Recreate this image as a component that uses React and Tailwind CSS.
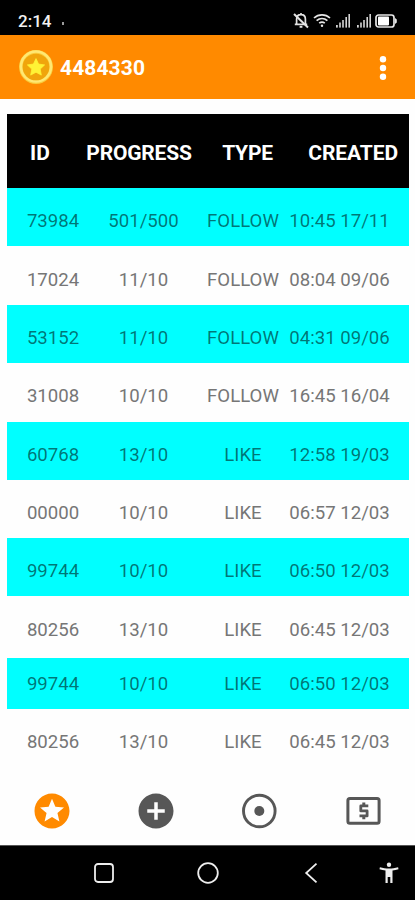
import React from "react";
import { MdStars, MdAddCircle } from "react-icons/md";

const rows = [
  { id: "73984", progress: "501/500", type: "FOLLOW", created: "10:45 17/11", box: "h-[58px] pt-[10px] mb-[1px]" },
  { id: "17024", progress: "11/10", type: "FOLLOW", created: "08:04 09/06", box: "h-[58px] pt-[9px]" },
  { id: "53152", progress: "11/10", type: "FOLLOW", created: "04:31 09/06", box: "h-[58px] pt-[10px]" },
  { id: "31008", progress: "10/10", type: "FOLLOW", created: "16:45 16/04", box: "h-[59px] pt-[9px]" },
  { id: "60768", progress: "13/10", type: "LIKE", created: "12:58 19/03", box: "h-[58px] pt-[9px]" },
  { id: "00000", progress: "10/10", type: "LIKE", created: "06:57 12/03", box: "h-[58px] pt-[9px]" },
  { id: "99744", progress: "10/10", type: "LIKE", created: "06:50 12/03", box: "h-[58px] pt-[10px]" },
  { id: "80256", progress: "13/10", type: "LIKE", created: "06:45 12/03", box: "h-[62px] pt-[7px]" },
  { id: "99744", progress: "10/10", type: "LIKE", created: "06:50 12/03", box: "h-[51px] pt-[3px]" },
  { id: "80256", progress: "13/10", type: "LIKE", created: "06:45 12/03", box: "h-[62px] pt-[5px]" },
];

function Signal() {
  return (
    <svg width="16" height="16" viewBox="0 0 16 16" fill="#d4d4d4">
      <rect x="1" y="12" width="1.8" height="2.6" />
      <rect x="4.2" y="9.5" width="1.6" height="5.1" />
      <rect x="7.2" y="7" width="1.6" height="7.6" />
      <rect x="10.4" y="4" width="1.6" height="10.6" />
      <rect x="13.4" y="1" width="1.6" height="13.6" />
    </svg>
  );
}

function StatusBar() {
  return (
    <div className="flex h-[35px] shrink-0 items-start bg-black pl-[18px] text-white">
      <span className="mt-[11px] w-[33px] text-[17px] leading-[20px] font-medium whitespace-nowrap text-[#f2f2f2]">
        2:14
      </span>
      <span className="mt-[22px] ml-[11px] h-[3px] w-[2px] bg-[#9a9a9a]" />
      <div className="mt-[12px] ml-auto flex h-[17px] items-center">
        <svg width="16" height="17" viewBox="0 0 16 17" fill="none" stroke="#e2e2e2" strokeWidth="1.700">
          <path d="M8 1v1.600M3.600 12V7.200C3.600 4.600 5.400 2.700 8 2.700s4.400 1.900 4.400 4.500V12M1.800 12.300h12.400" />
          <path d="M1 2l14 13.500" strokeWidth="2" />
          <path d="M6.600 14.800h2.800" strokeWidth="2" />
        </svg>
        <svg className="ml-[4px]" width="18" height="15" viewBox="0 0 18 15" fill="none" stroke="#e6e6e6" strokeWidth="1.700">
          <path d="M1 5C5.500 .8 12.500 .8 17 5M3.600 7.700C6.800 4.900 11.200 4.900 14.400 7.700M6.200 10.200c1.700-1.400 3.900-1.400 5.600 0" />
          <circle cx="9" cy="12.800" r="1.200" fill="#e6e6e6" stroke="none" />
        </svg>
        <span className="ml-[4px]"><Signal /></span>
        <span className="ml-[5px]"><Signal /></span>
        <svg className="mr-[18px] ml-[3px]" width="22" height="14" viewBox="0 0 22 14">
          <rect x="1" y="1" width="18" height="12" rx="2.500" fill="none" stroke="#e6e6e6" strokeWidth="1.700" />
          <rect x="3" y="2.600" width="11" height="8.800" rx=".8" fill="#ffffff" />
          <path d="M20 4l1.800 1.500v3L20 10z" fill="#e6e6e6" />
        </svg>
      </div>
    </div>
  );
}

function Coin() {
  return (
    <svg width="36" height="36" viewBox="0 0 36 36">
      <circle cx="18" cy="18" r="17" fill="#f9cc3c" />
      <circle cx="18" cy="17.500" r="15" fill="none" stroke="#ffe873" strokeWidth="2.600" />
      <circle cx="18" cy="18" r="13.300" fill="#f0a50c" />
      <path
        d="M18 9.600l2.600 5.500 6 .8-4.400 4.200 1.100 6-5.300-2.900-5.300 2.900 1.100-6-4.400-4.200 6-.8z"
        fill="#fff335"
        stroke="#fff335"
        strokeWidth=".8"
        strokeLinejoin="round"
      />
    </svg>
  );
}

function TargetIcon() {
  return (
    <svg width="42" height="42" viewBox="0 0 42 42">
      <circle cx="21.300" cy="21" r="15.800" fill="none" stroke="currentColor" strokeWidth="2.900" />
      <circle cx="21.300" cy="21" r="5" fill="currentColor" />
    </svg>
  );
}

function BillIcon() {
  return (
    <svg width="42" height="42" viewBox="0 0 42 42" fill="none" stroke="currentColor">
      <rect x="5.900" y="8.400" width="31.200" height="24.800" rx="2" strokeWidth="3" />
      <path d="M26.300 15.900h-7.500v5h6.300v5h-7.600" strokeWidth="2.800" strokeLinejoin="round" />
      <path d="M21.800 12.400v3M21.800 26v3.300" strokeWidth="3" />
    </svg>
  );
}

function AccessibilityIcon() {
  return (
    <svg className="ml-[68px]" width="20" height="22" viewBox="0 0 20 22" fill="currentColor">
      <circle cx="10" cy="2.800" r="2.200" />
      <path d="M.9 5.300C4 6.200 7 6.500 10 6.500s6-.3 9.100-1.200l.4 1.900c-2 .6-4 1-6 1.200V21h-2.200v-6H8.700v6H6.500V8.400c-2-.2-4-.6-6-1.200z" />
    </svg>
  );
}

export default function App() {
  return (
    <div className="flex h-[900px] w-[415px] flex-col overflow-hidden bg-[#fefefe] font-[Roboto,sans-serif]">
      <StatusBar />
      <header className="flex h-[64px] shrink-0 items-center bg-[#ff8a00] pl-[18px] text-white">
        <Coin />
        <span className="mt-[3px] ml-[6px] text-[21px] font-bold tracking-[0.1px] whitespace-nowrap">4484330</span>
        <svg className="mr-[26px] ml-auto mt-px" width="12" height="26" viewBox="0 0 12 26" fill="#fff">
          <circle cx="6" cy="4.200" r="3.200" />
          <circle cx="6" cy="13" r="3.200" />
          <circle cx="6" cy="21.800" r="3.200" />
        </svg>
      </header>

      <main className="mt-[15px] ml-[7px] flex w-[402px] shrink-0 flex-col">
        <div className="flex h-[74px] items-center bg-black pt-[5px] text-[21px] font-bold text-white">
          <span className="flex w-[66px] justify-center">ID</span>
          <span className="flex w-[132px] justify-center tracking-[-0.2px]">PROGRESS</span>
          <span className="flex w-[85px] justify-center tracking-[-0.2px]">TYPE</span>
          <span className="flex flex-1 justify-end pr-[11px] tracking-[-0.1px]">CREATED</span>
        </div>
        {rows.map((row, i) => (
          <div
            key={i}
            className={`flex shrink-0 items-center text-[18.6px] whitespace-nowrap ${row.box} ${
              i % 2 === 0 ? "bg-[#00ffff] text-black/55" : "text-[#767676]"
            }`}
          >
            <span className="flex w-[92px] justify-center">{row.id}</span>
            <span className="flex w-[89px] justify-center">{row.progress}</span>
            <span className="flex w-[110px] justify-center">{row.type}</span>
            <span className="flex w-[83px] justify-center">{row.created}</span>
          </div>
        ))}
      </main>

      <nav className="grid flex-1 grid-cols-4 items-center justify-items-center pt-[5px] text-[#575757]">
        <MdStars size={42} className="text-[#ff8a00]" />
        <MdAddCircle size={42} />
        <TargetIcon />
        <BillIcon />
      </nav>

      <div className="grid h-[55px] shrink-0 grid-cols-4 items-center border-t border-[#555] bg-black text-[#eeeeee]">
        <svg className="ml-[93px]" width="22" height="22" viewBox="0 0 22 22" fill="none" stroke="currentColor" strokeWidth="1.800">
          <rect x="2" y="2" width="18" height="18" rx="3" />
        </svg>
        <svg className="ml-[93px]" width="24" height="24" viewBox="0 0 24 24" fill="none" stroke="currentColor" strokeWidth="1.800">
          <circle cx="11" cy="12" r="9.800" />
        </svg>
        <svg className="ml-[96px]" width="14" height="22" viewBox="0 0 14 22" fill="none" stroke="currentColor" strokeWidth="1.800">
          <path d="M12.500 1.700L2.200 11l10.300 9.300" />
        </svg>
        <AccessibilityIcon />
      </div>
    </div>
  );
}
